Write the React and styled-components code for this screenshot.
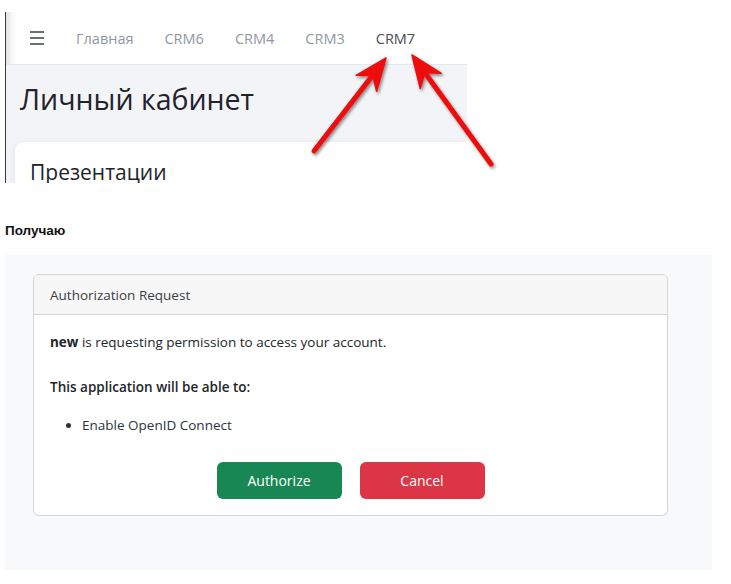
import React from "react";
import styled, { createGlobalStyle } from "styled-components";

const Global = createGlobalStyle`
  html, body { margin: 0; padding: 0; background: #fff; }
  body { font-family: "Open Sans", "Noto Sans", sans-serif; color: #212529; }
  * { box-sizing: border-box; }
`;

const Page = styled.div`
  position: relative;
  width: 731px;
  height: 584px;
  overflow: hidden;
`;

const Shot = styled.div`
  width: 467px;
  height: 183px;
  padding-top: 12px;
`;

const ShotInner = styled.div`
  margin-left: 5px;
  height: 171px;
  border-left: 1.5px solid #3a3a3a;
  display: flex;
  flex-direction: column;
  overflow: hidden;
  box-shadow: inset 10px 0 10px -8px rgba(0, 0, 0, 0.18);
`;

const NavBar = styled.div`
  height: 53px;
  flex: none;
  display: flex;
  align-items: center;
  padding-left: 24px;
  border-bottom: 1px solid #e3e6ec;
  font-family: "Open Sans", sans-serif;
  font-size: 14.5px;
`;

const Burger = styled.div`
  width: 14px;
  display: flex;
  flex-direction: column;
  gap: 3.5px;
  margin-right: 32px;
  span {
    display: block;
    height: 2.5px;
    background: #6b6f78;
  }
`;

const NavLinks = styled.div`
  display: flex;
  gap: 31px;
`;

const NavLink = styled.span`
  color: ${(p) => (p.$active ? "#4a4d55" : "#9097a3")};
`;

const Content = styled.div`
  flex: 1;
  background: #f3f4f7;
  padding: 15px 0 0 9px;
  display: flex;
  flex-direction: column;
`;

const PageTitle = styled.h1`
  margin: 0 0 0 5px;
  font-size: 28.5px;
  font-weight: 400;
  line-height: 38px;
  color: #1f232b;
  font-family: "Open Sans", sans-serif;
`;

const SectionCard = styled.div`
  flex: 1;
  margin-top: 24px;
  background: #fff;
  border-top-left-radius: 9px;
  padding: 15px 0 0 15px;
  box-shadow: -2px 0 6px rgba(0, 0, 0, 0.04);
`;

const SectionTitle = styled.h2`
  margin: 0;
  font-size: 21px;
  font-weight: 400;
  line-height: 30px;
  color: #1f232b;
  font-family: "Open Sans", sans-serif;
`;

const Caption = styled.div`
  margin: 40px 0 0 5px;
  font-family: "Liberation Sans", Arial, sans-serif;
  font-weight: 700;
  font-size: 13.5px;
  line-height: 16px;
  color: #111;
`;

const Panel = styled.div`
  margin: 16px 0 0 5px;
  width: 707px;
  height: 315px;
  background: #f8f9fa;
  padding: 19px 44px 0 28px;
`;

const Card = styled.div`
  background: #fff;
  border: 1px solid #d4d4d4;
  border-radius: 6px;
  overflow: hidden;
  font-family: "Open Sans", sans-serif;
  font-size: 13.5px;
  color: #212529;
`;

const CardHeader = styled.div`
  height: 40px;
  background: #f7f7f7;
  border-bottom: 1px solid #d4d4d4;
  display: flex;
  align-items: center;
  padding-left: 16px;
  color: #3b3f44;
`;

const CardBody = styled.div`
  padding: 17px 16px 16px 16px;
`;

const Para = styled.p`
  margin: 0 0 ${(p) => (p.$strong ? "18px" : "25px")} 0;
  line-height: 20px;
  font-weight: ${(p) => (p.$strong ? 600 : 400)};
  b { font-weight: 700; }
`;

const List = styled.ul`
  margin: 0 0 27px 0;
  padding-left: 32px;
  line-height: 20px;
  color: #2a3340;
`;

const Buttons = styled.div`
  display: flex;
  justify-content: center;
  gap: 18px;
`;

const Button = styled.button`
  width: 125px;
  height: 37px;
  border: none;
  border-radius: 6px;
  font-family: "Open Sans", sans-serif;
  font-size: 14px;
  color: #fff;
  background: ${(p) => (p.$variant === "danger" ? "#dc3545" : "#198754")};
`;

const ArrowLayer = styled.svg`
  position: absolute;
  left: 0;
  top: 0;
  pointer-events: none;
`;

function Arrow({ x1, y1, x2, y2 }) {
  const dx = x2 - x1;
  const dy = y2 - y1;
  const len = Math.hypot(dx, dy);
  const ux = dx / len;
  const uy = dy / len;
  const px = -uy;
  const py = ux;
  const headLen = 32;
  const headW = 13;
  const bx = x2 - headLen * ux;
  const by = y2 - headLen * uy;
  const nx = x2 - 22 * ux;
  const ny = y2 - 22 * uy;
  const pts = [
    [x2, y2],
    [bx + headW * px, by + headW * py],
    [nx, ny],
    [bx - headW * px, by - headW * py],
  ]
    .map((p) => p.join(","))
    .join(" ");
  return (
    <g filter="url(#shadow)">
      <line x1={x1} y1={y1} x2={nx} y2={ny} stroke="#ee0a0a" strokeWidth="5" strokeLinecap="round" />
      <polygon points={pts} fill="#ee0a0a" stroke="#ee0a0a" strokeWidth="1.5" strokeLinejoin="round" />
    </g>
  );
}

export default function App() {
  return (
    <Page>
      <Global />
      <Shot>
        <ShotInner>
          <NavBar>
            <Burger>
              <span />
              <span />
              <span />
            </Burger>
            <NavLinks>
              <NavLink>Главная</NavLink>
              <NavLink>CRM6</NavLink>
              <NavLink>CRM4</NavLink>
              <NavLink>CRM3</NavLink>
              <NavLink $active>CRM7</NavLink>
            </NavLinks>
          </NavBar>
          <Content>
            <PageTitle>Личный кабинет</PageTitle>
            <SectionCard>
              <SectionTitle>Презентации</SectionTitle>
            </SectionCard>
          </Content>
        </ShotInner>
      </Shot>
      <Caption>Получаю</Caption>
      <Panel>
        <Card>
          <CardHeader>Authorization Request</CardHeader>
          <CardBody>
            <Para>
              <b>new</b> is requesting permission to access your account.
            </Para>
            <Para $strong>This application will be able to:</Para>
            <List>
              <li>Enable OpenID Connect</li>
            </List>
            <Buttons>
              <Button>Authorize</Button>
              <Button $variant="danger">Cancel</Button>
            </Buttons>
          </CardBody>
        </Card>
      </Panel>
      <ArrowLayer width="731" height="200" viewBox="0 0 731 200">
        <defs>
          <filter id="shadow" x="-20%" y="-20%" width="140%" height="140%">
            <feDropShadow dx="1.5" dy="2" stdDeviation="1.5" floodColor="#000" floodOpacity="0.45" />
          </filter>
        </defs>
        <Arrow x1={314} y1={151} x2={386} y2={58} />
        <Arrow x1={491} y1={164} x2={412} y2={55} />
      </ArrowLayer>
    </Page>
  );
}
